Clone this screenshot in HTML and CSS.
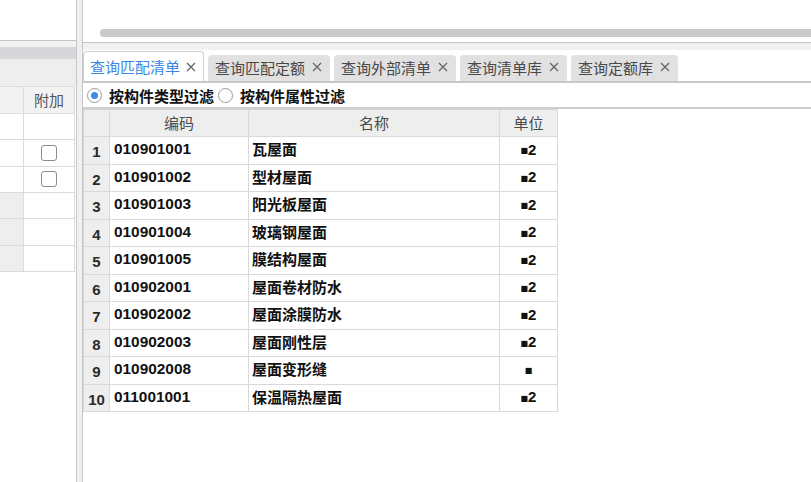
FILE: index.html
```html
<!DOCTYPE html>
<html lang="zh-CN">
<head>
<meta charset="utf-8">
<title>查询匹配清单</title>
<link rel="stylesheet" href="styles.css">
</head>
<body>
<div class="app">
  <div class="left">
    <div class="left-top"></div>
    <div class="left-gap"></div>
    <div class="left-band"></div>
    <div class="left-tools"></div>
    <div class="ltable">
      <div class="lrow lhead"><div></div><div class="lh">附加</div></div>
      <div class="lrow"><div></div><div></div></div>
      <div class="lrow"><div></div><div class="lcb"><span class="cb"></span></div></div>
      <div class="lrow"><div></div><div class="lcb"><span class="cb"></span></div></div>
      <div class="lrow"><div class="lg"></div><div></div></div>
      <div class="lrow"><div class="lg"></div><div></div></div>
      <div class="lrow"><div class="lg"></div><div></div></div>
    </div>
  </div>
  <div class="splitter"></div>
  <div class="right">
    <div class="right-top"><div class="thumb"></div></div>
    <div class="tabstrip"></div>
    <div class="tabbar">
      <div class="tab active"><span>查询匹配清单</span><svg class="x" viewBox="0 0 10 10"><path d="M1 1L9 9M9 1L1 9"/></svg></div>
      <div class="tab"><span>查询匹配定额</span><svg class="x" viewBox="0 0 10 10"><path d="M1 1L9 9M9 1L1 9"/></svg></div>
      <div class="tab"><span>查询外部清单</span><svg class="x" viewBox="0 0 10 10"><path d="M1 1L9 9M9 1L1 9"/></svg></div>
      <div class="tab"><span>查询清单库</span><svg class="x" viewBox="0 0 10 10"><path d="M1 1L9 9M9 1L1 9"/></svg></div>
      <div class="tab"><span>查询定额库</span><svg class="x" viewBox="0 0 10 10"><path d="M1 1L9 9M9 1L1 9"/></svg></div>
    </div>
    <div class="filter">
      <span class="radio on"></span><span class="rlabel">按构件类型过滤</span>
      <span class="radio second"></span><span class="rlabel">按构件属性过滤</span>
    </div>
    <div class="grid">
      <div class="c h"></div><div class="c h">编码</div><div class="c h">名称</div><div class="c h">单位</div>

      <div class="c n">1</div><div class="c code">010901001</div><div class="c name">瓦屋面</div><div class="c unit"><span class="sq">■</span>2</div>
      <div class="c n">2</div><div class="c code">010901002</div><div class="c name">型材屋面</div><div class="c unit"><span class="sq">■</span>2</div>
      <div class="c n">3</div><div class="c code">010901003</div><div class="c name">阳光板屋面</div><div class="c unit"><span class="sq">■</span>2</div>
      <div class="c n">4</div><div class="c code">010901004</div><div class="c name">玻璃钢屋面</div><div class="c unit"><span class="sq">■</span>2</div>
      <div class="c n">5</div><div class="c code">010901005</div><div class="c name">膜结构屋面</div><div class="c unit"><span class="sq">■</span>2</div>
      <div class="c n">6</div><div class="c code">010902001</div><div class="c name">屋面卷材防水</div><div class="c unit"><span class="sq">■</span>2</div>
      <div class="c n">7</div><div class="c code">010902002</div><div class="c name">屋面涂膜防水</div><div class="c unit"><span class="sq">■</span>2</div>
      <div class="c n">8</div><div class="c code">010902003</div><div class="c name">屋面刚性层</div><div class="c unit"><span class="sq">■</span>2</div>
      <div class="c n">9</div><div class="c code">010902008</div><div class="c name">屋面变形缝</div><div class="c unit"><span class="sq">■</span></div>
      <div class="c n">10</div><div class="c code">011001001</div><div class="c name">保温隔热屋面</div><div class="c unit"><span class="sq">■</span>2</div>
    </div>
  </div>
</div>
</body>
</html>
```
FILE: styles.css
```css
* { box-sizing: border-box; }
html, body { margin: 0; padding: 0; }
body {
  width: 811px;
  height: 482px;
  overflow: hidden;
  background: #fff;
  font-family: "Noto Sans CJK SC", "Noto Sans", sans-serif;
}
.app { display: flex; height: 482px; }

/* left panel */
.left {
  width: 77px;
  border-right: 1px solid #c6c6c6;
  display: flex;
  flex-direction: column;
}
.left-top { height: 41px; border-bottom: 1px solid #c6c6c6; }
.left-gap { height: 6px; background: #f3f3f3; }
.left-band { height: 12px; background: #d7d7db; }
.left-tools { height: 27px; background: #eeeeee; }
.ltable { width: 75px; }
.lrow {
  display: grid;
  grid-template-columns: 24px 51px;
  height: 26.33px;
}
.lrow > div {
  border-right: 1px solid #dcdcdc;
  border-bottom: 1px solid #dcdcdc;
}
.lhead { height: 28px; border-top: 1px solid #dcdcdc; }
.lhead > div { background: #f2f2f2; }
.lh {
  display: flex;
  align-items: center;
  justify-content: center;
  font-size: 15px;
  color: #555;
  padding-bottom: 2px;
}
.lg { background: #eeeeee; }
.lcb { display: flex; align-items: center; justify-content: center; }
.cb {
  width: 16px;
  height: 16px;
  border: 1px solid #8c8c8c;
  border-radius: 3px;
  background: #fff;
}

.splitter {
  width: 6px;
  background: #f0f0f0;
  border-right: 1px solid #c6c6c6;
}

/* right panel */
.right { flex: 1; min-width: 0; display: flex; flex-direction: column; }
.right-top {
  height: 43px;
  border-bottom: 1px solid #c6c6c6;
  padding: 29px 0 0 17px;
}
.thumb { height: 8px; background: #c9c9c9; border-radius: 4px 0 0 4px; }
.tabstrip { height: 7px; background: #f0f0f0; }
.tabbar {
  height: 33px;
  border-bottom: 2px solid #c8c8c8;
  display: flex;
  align-items: flex-end;
  gap: 4px;
}
.tab {
  height: 26px;
  background: #e1e1e1;
  border-radius: 4px 4px 0 0;
  padding: 0 8px 2px 7px;
  display: flex;
  align-items: center;
  gap: 7px;
  font-size: 15px;
  color: #484848;
  white-space: nowrap;
}
.tab.active {
  height: 30px;
  padding: 2px 7px 2px 6px;
  gap: 6px;
  background: #fff;
  border: 1px solid #cfcfcf;
  border-bottom: none;
  color: #3a86e6;
}
.x { width: 10px; height: 10px; flex: none; }
.x path { stroke: #666; stroke-width: 1.3; fill: none; }

.filter {
  height: 26px;
  border-bottom: 2px solid #cfcfcf;
  display: flex;
  align-items: center;
  padding-left: 4px;
  font-size: 15px;
  font-weight: 700;
  color: #111;
}
.radio {
  width: 15px;
  height: 15px;
  border: 1px solid #9a9a9a;
  border-radius: 50%;
  background: #fff;
  display: flex;
  align-items: center;
  justify-content: center;
  flex: none;
}
.radio.on::after {
  content: "";
  width: 7px;
  height: 7px;
  border-radius: 50%;
  background: #3b8beb;
}
.rlabel { margin-left: 7px; }
.radio.second { margin-left: 4px; }

/* grid */
.grid {
  display: grid;
  grid-template-columns: 26px 139px 251px 58px;
  width: 475px;
  border-left: 1px solid #d6d6d6;
  border-top: 1px solid #d6d6d6;
}
.c {
  height: 27.5px;
  border-right: 1px solid #d9d9d9;
  border-bottom: 1px solid #d9d9d9;
  display: flex;
  align-items: center;
  white-space: nowrap;
}
.c.h {
  height: 27px;
  background: #eeeeee;
  justify-content: center;
  font-size: 15px;
  color: #4a4a4a;
  padding-bottom: 2px;
}
.c.n {
  background: #eeeeee;
  justify-content: center;
  font-family: "Liberation Sans", Arial, sans-serif;
  font-weight: 700;
  font-size: 15px;
  color: #2a2a2a;
  padding-top: 3px;
}
.c.code {
  padding-left: 4px;
  padding-bottom: 2px;
  font-family: "Liberation Sans", Arial, sans-serif;
  font-weight: 700;
  font-size: 15.4px;
  color: #111;
}
.c.name {
  padding-left: 3px;
  padding-bottom: 3px;
  font-size: 15px;
  font-weight: 700;
  color: #111;
}
.c.unit {
  justify-content: center;
  font-family: "Liberation Sans", Arial, sans-serif;
  font-weight: 700;
  font-size: 15px;
  color: #111;
  padding-bottom: 2px;
}
.sq { font-family: "DejaVu Sans", sans-serif; font-size: 8px; line-height: 1; margin-top: 4px; }
```
